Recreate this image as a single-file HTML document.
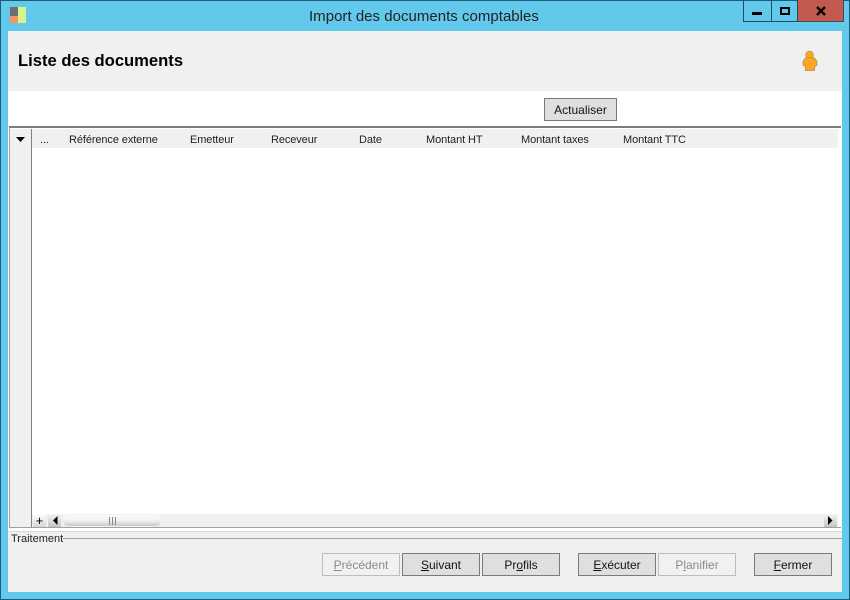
<!DOCTYPE html>
<html><head><meta charset="utf-8"><style>
html,body{margin:0;padding:0}
body{width:850px;height:600px;overflow:hidden;position:relative;background:#63c9ec;font-family:"Liberation Sans",sans-serif;color:#111}
div{position:absolute;box-sizing:border-box}
.t{white-space:nowrap;font-size:11px;letter-spacing:-.1px;line-height:14px;top:133px;color:#222}
.b{top:553px;width:78px;height:23px;background:#dfdfdf;border:1px solid #7a7a7a;text-align:center;font-size:12px;line-height:22px;color:#111}
.d{background:#f1f1f1;border-color:#bdbdbd;color:#8a8a8a}
</style></head><body>
<div style="left:0;top:0;width:850px;height:600px;border:1px solid #1b5c78"></div>
<div style="left:10px;top:7px;width:8px;height:9px;background:#6f6f6f"></div>
<div style="left:10px;top:16px;width:8px;height:7px;background:#f79460"></div>
<div style="left:18px;top:7px;width:8px;height:16px;background:#d2f58c"></div>
<div style="left:309px;top:0;white-space:nowrap;font-size:15px;letter-spacing:.02px;line-height:33px;color:#222">Import des documents comptables</div>
<div style="left:743px;top:0;width:29px;height:22px;border:1px solid #1d4c64;border-top:0"></div>
<div style="left:771px;top:0;width:27px;height:22px;border:1px solid #1d4c64;border-top:0;border-left:0"></div>
<div style="left:798px;top:0;width:46px;height:22px;background:#c25a50;border:1px solid #3f4d58;border-top:0;border-left:0"></div>
<div style="left:752px;top:12px;width:10px;height:3px;background:#000"></div>
<div style="left:780px;top:7px;width:10px;height:8px;border:2px solid #000"></div>
<svg style="position:absolute;left:816px;top:6px" width="11" height="10"><path d="M1 1L9 9M9 1L1 9" stroke="#000" stroke-width="2.4" fill="none"/></svg>

<div style="left:8px;top:31px;width:834px;height:561px;background:#fff"></div>
<div style="left:8px;top:31px;width:834px;height:60px;background:#f0f0f0"></div>
<div style="left:18px;top:50px;font-size:16.6px;font-weight:bold;line-height:21px;color:#000;white-space:nowrap">Liste des documents</div>
<svg style="position:absolute;left:801px;top:50px" width="18" height="22"><circle cx="8.5" cy="5" r="3.9" fill="#f9a825" stroke="#c98a2c" stroke-width=".6"/><path d="M6 7.5Q3 8.5 2 12V15Q3 16 4 16L4.5 20.5H13.5L14 16Q15 16 16 15V12Q15 8.5 12 7.5Z" fill="#f9a825" stroke="#b98a3c" stroke-width=".7"/></svg>

<div class="b" style="left:544px;top:98px;width:73px;height:23px">Actualiser</div>

<div style="left:9px;top:126px;width:832px;height:2px;background:#7d7d7d"></div>
<div style="left:9px;top:128px;width:1px;height:400px;background:#a0a0a0"></div>
<div style="left:10px;top:129px;width:21px;height:398px;background:#f0f0f0"></div>
<div style="left:31px;top:129px;width:1px;height:398px;background:#808080"></div>
<div style="left:32px;top:129px;width:806px;height:19px;background:#f0f0f0"></div>
<svg style="position:absolute;left:16px;top:137px" width="9" height="5"><path d="M0 0H9L4.5 5Z" fill="#000"/></svg>
<div class="t" style="left:40px">...</div>
<div class="t" style="left:69px">Référence externe</div>
<div class="t" style="left:190px">Emetteur</div>
<div class="t" style="left:271px">Receveur</div>
<div class="t" style="left:359px">Date</div>
<div class="t" style="left:426px">Montant HT</div>
<div class="t" style="left:521px">Montant taxes</div>
<div class="t" style="left:623px">Montant TTC</div>

<div style="left:32px;top:514px;width:806px;height:13px;background:#f0f0f0"></div>
<div style="left:33px;top:514px;width:13px;height:13px;background:linear-gradient(#fff,#d5d5d5);text-align:center;font-size:13px;line-height:13px;color:#000">+</div>
<div style="left:48px;top:514px;width:13px;height:13px;background:linear-gradient(#f4f4f4,#c4c4c4)"></div>
<svg style="position:absolute;left:53px;top:516px" width="6" height="10"><path d="M4.5 0V9L0 4.5Z" fill="#000"/></svg>
<div style="left:63px;top:515px;width:98px;height:11px;border-radius:5px;background:linear-gradient(#fafafa,#f2f2f2 50%,#c8c8c8)"></div>
<div style="left:109px;top:517px;width:7px;height:8px;border-left:1px solid #888;border-right:1px solid #888"></div>
<div style="left:112px;top:517px;width:1px;height:8px;background:#888"></div>
<div style="left:824px;top:514px;width:13px;height:13px;background:linear-gradient(#f4f4f4,#c4c4c4)"></div>
<svg style="position:absolute;left:827px;top:516px" width="6" height="10"><path d="M1 0V9L5.5 4.5Z" fill="#000"/></svg>
<div style="left:9px;top:527px;width:832px;height:1px;background:#a0a0a0"></div>

<div style="left:8px;top:531px;width:834px;height:61px;background:#f0f0f0;border-top:1px solid #d8d8d8"></div>
<div style="left:63px;top:538px;width:779px;height:1px;background:#a0a0a0"></div>
<div style="left:11px;top:532px;font-size:11px;line-height:14px;color:#222;white-space:nowrap">Traitement</div>

<div class="b d" style="left:322px"><u>P</u>récédent</div>
<div class="b" style="left:402px"><u>S</u>uivant</div>
<div class="b" style="left:482px">Pr<u>o</u>fils</div>
<div class="b" style="left:578px"><u>E</u>xécuter</div>
<div class="b d" style="left:658px">P<u>l</u>anifier</div>
<div class="b" style="left:754px"><u>F</u>ermer</div>
</body></html>
